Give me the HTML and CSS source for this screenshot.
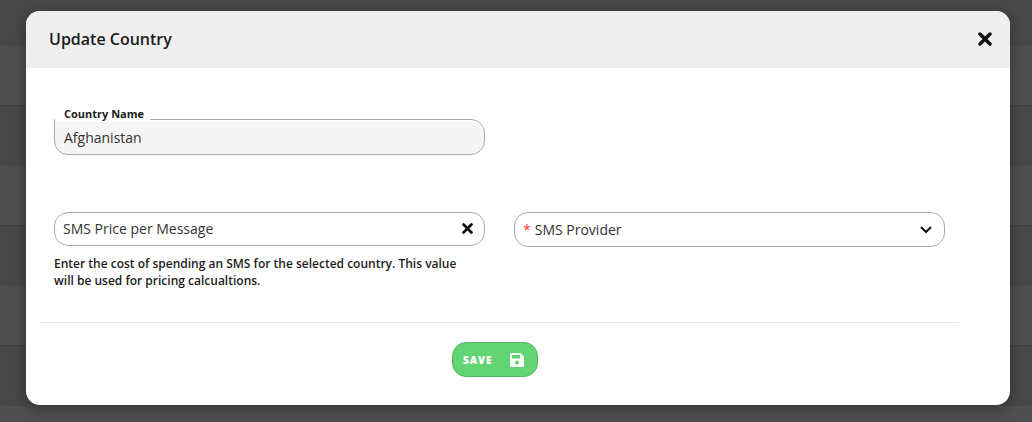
FILE: index.html
```html
<!DOCTYPE html>
<html lang="en">
<head>
<meta charset="UTF-8">
<meta name="viewport" content="width=device-width, initial-scale=1">
<title>Update Country</title>
<link rel="stylesheet" href="styles.css">
</head>
<body>

<div class="modal" role="dialog" aria-labelledby="modal-title">
  <div class="modal-header">
    <h1 id="modal-title">Update Country</h1>
    <button type="button" class="icon-button" aria-label="Close">
      <svg width="14" height="14" viewBox="0 0 14 14"><path d="M2 2L12 12M12 2L2 12"/></svg>
    </button>
  </div>

  <form class="modal-body">
    <div class="row">
      <div class="field">
        <label class="field-label" for="country">Country Name</label>
        <input type="text" class="control readonly" id="country" name="country" value="Afghanistan" readonly>
      </div>
    </div>

    <div class="row">
      <div class="field">
        <div class="control price">
          <input type="text" id="price" name="price" placeholder="SMS Price per Message" aria-label="SMS Price per Message" aria-describedby="price-hint">
          <button type="button" class="icon-button" aria-label="Clear">
            <svg width="11" height="11" viewBox="0 0 14 14"><path d="M2 2L12 12M12 2L2 12"/></svg>
          </button>
        </div>
        <p class="hint" id="price-hint">Enter the cost of spending an SMS for the selected country. This value will be used for pricing calcualtions.</p>
      </div>

      <div class="field">
        <div class="control provider">
          <span class="required">*</span>
          <select id="provider" name="provider" aria-label="SMS Provider" required>
            <option value="">SMS Provider</option>
          </select>
          <svg class="chevron" width="12" height="8" viewBox="0 0 12 8"><path d="M1 1L6 6L11 1"/></svg>
        </div>
      </div>
    </div>

    <div class="modal-footer">
      <button type="submit" class="save-button">
        Save
        <svg width="14" height="14" viewBox="0 0 14 14"><path fill-rule="evenodd" d="M2 0H10.500L14 3.500V12A2 2 0 0 1 12 14H2A2 2 0 0 1 0 12V2A2 2 0 0 1 2 0ZM2 2V5.500H10V2ZM7 7.500A2.100 2.100 0 1 0 7 11.700A2.100 2.100 0 1 0 7 7.500Z"/></svg>
      </button>
    </div>
  </form>
</div>

</body>
</html>
```

FILE: styles.css
```css
* {
  box-sizing: border-box;
}

body {
  margin: 0;
  padding: 11px 22px 17px 26px;
  font-family: "Open Sans", sans-serif;
  font-size: 14px;
  color: #1c1c1c;
  /* dimmed table rows behind the dialog */
  background: repeating-linear-gradient(#484848 0 46px, #4f4f4f 46px 105px, #424242 105px 106px, #484848 106px 120px);
}

.modal {
  background: #fff;
  border-radius: 14px;
  overflow: hidden;
  box-shadow: 0 3px 16px rgba(0, 0, 0, 0.35);
}

.modal-header {
  display: flex;
  align-items: center;
  justify-content: space-between;
  height: 57px;
  padding: 0 18px 2px 23px;
  background: #efefef;
}

h1 {
  margin: 0;
  font-size: 16px;
  font-weight: 600;
}

.icon-button {
  display: flex;
  padding: 0;
  border: none;
  background: none;
  cursor: pointer;
}

.icon-button path {
  fill: none;
  stroke: #111;
  stroke-width: 3.5;
  stroke-linecap: round;
}

.modal-body {
  padding: 51px 51px 28px 14px;
}

.row {
  display: grid;
  grid-template-columns: 1fr 1fr;
  gap: 29px;
  padding: 0 14px;
  margin-bottom: 57px;
}

.row + .row {
  margin-bottom: 33px;
}

.field {
  position: relative;
}

.control {
  display: flex;
  align-items: center;
  width: 100%;
  height: 36px;
  padding: 0 10px;
  border: 1px solid #aaa;
  border-radius: 14px;
  background: #fff;
}

.control input,
.control select {
  flex: 1;
  min-width: 0;
  padding: 0;
  border: none;
  background: none;
  appearance: none;
}

input,
select {
  font: inherit;
  color: #333;
}

input::placeholder {
  color: #333;
  opacity: 1;
}

.readonly {
  padding-left: 9px;
  border-top-left-radius: 0;
  background: #f5f5f5;
  box-shadow: inset 0 2px 1px #fff;
}

.field-label {
  position: absolute;
  left: 1px;
  top: -14px;
  width: 95px;
  padding-left: 9px;
  background: #fff;
  font-size: 11px;
  line-height: 17px;
  font-weight: 700;
}

.price {
  height: 34px;
  padding: 0 11px 2px 8px;
}

.provider {
  height: 35px;
  padding: 0 12px 0 8px;
}

.required {
  margin-right: 4px;
  color: #f33;
}

.chevron {
  fill: none;
  stroke: #111;
  stroke-width: 2;
}

.hint {
  margin: 9px 0 0;
  padding-right: 20px;
  font-size: 12px;
  line-height: 17px;
  font-weight: 600;
}

.modal-footer {
  padding: 19px 9px 0 0;
  border-top: 1px solid #e5e5e5;
  text-align: center;
}

.save-button {
  display: inline-flex;
  align-items: center;
  justify-content: space-between;
  width: 86px;
  height: 35px;
  padding: 0 13px 0 10px;
  border: 1px solid #52b963;
  border-radius: 14px;
  background: #62d474;
  color: #fff;
  font-family: inherit;
  font-size: 10px;
  font-weight: 800;
  letter-spacing: 1px;
  text-transform: uppercase;
  cursor: pointer;
}

.save-button svg {
  fill: #fff;
}
```
